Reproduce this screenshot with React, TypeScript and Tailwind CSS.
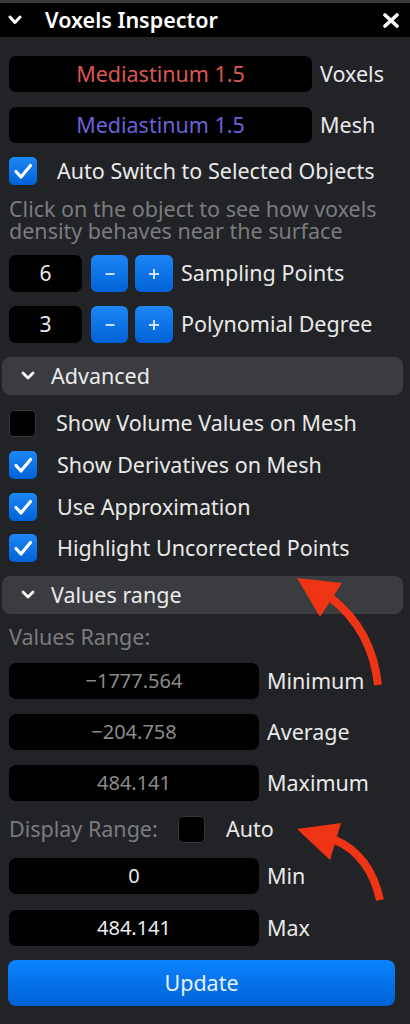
import React from "react";

const font = { fontFamily: '"Noto Sans", "DejaVu Sans", sans-serif' };

function Check() {
  return (
    <svg width="28" height="28" viewBox="0 0 28 28" className="block">
      <polyline points="7,14.5 12,20 21.5,8.5" fill="none" stroke="white" strokeWidth="3.2" strokeLinecap="round" strokeLinejoin="round" />
    </svg>
  );
}

function Checkbox({ checked }: { checked: boolean }) {
  if (checked) {
    return (
      <div className="w-[28px] h-[28px] rounded-[5px] bg-gradient-to-b from-[#1d86f7] to-[#0062d6] shrink-0 flex items-center justify-center">
        <Check />
      </div>
    );
  }
  return <div className="w-[27px] h-[27px] rounded-[5px] bg-black border border-[#34363a] shrink-0" />;
}

function CheckRow({ checked, label, mt }: { checked: boolean; label: string; mt: string }) {
  return (
    <div className={`flex items-center gap-[20px] ${mt}`}>
      <Checkbox checked={checked} />
      <span className="text-[21.5px] leading-[28px] text-[#e9e9e9]">{label}</span>
    </div>
  );
}

function Stepper({ value, label, mt }: { value: string; label: string; mt: string }) {
  return (
    <div className={`flex items-center h-[37px] ${mt}`}>
      <div className="w-[73px] h-[37px] bg-black rounded-[7px] flex items-center justify-center text-[21px] text-[#ececec]">{value}</div>
      <div className="ml-[9px] w-[37px] h-[37px] rounded-[6px] bg-gradient-to-b from-[#1d86f7] to-[#0062d6] flex items-center justify-center">
        <svg width="12" height="12" viewBox="0 0 12 12"><line x1="1.5" y1="6" x2="10.5" y2="6" stroke="#dfe9ff" strokeWidth="1.8" /></svg>
      </div>
      <div className="ml-[7px] w-[38px] h-[37px] rounded-[6px] bg-gradient-to-b from-[#1d86f7] to-[#0062d6] flex items-center justify-center">
        <svg width="12" height="12" viewBox="0 0 12 12"><line x1="1" y1="6" x2="11" y2="6" stroke="#dfe9ff" strokeWidth="1.8" /><line x1="6" y1="1" x2="6" y2="11" stroke="#dfe9ff" strokeWidth="1.8" /></svg>
      </div>
      <span className="ml-[8px] text-[21.5px] text-[#e9e9e9]">{label}</span>
    </div>
  );
}

function SectionHeader({ label, mt }: { label: string; mt: string }) {
  return (
    <div className={`-ml-[7px] w-[401px] h-[38px] rounded-[8px] bg-[#3a3c40] flex items-center ${mt}`}>
      <svg width="14" height="10" viewBox="0 0 14 10" className="ml-[19px]">
        <polyline points="2,2 7,7 12,2" fill="none" stroke="white" strokeWidth="2.8" strokeLinecap="round" strokeLinejoin="round" />
      </svg>
      <span className="ml-[16px] text-[21.5px] text-[#ececec]">{label}</span>
    </div>
  );
}

function ValueRow({ value, label, mt, dim }: { value: string; label: string; mt: string; dim?: boolean }) {
  return (
    <div className={`flex items-center h-[36px] ${mt}`}>
      <div className={`w-[250px] h-[36px] bg-black rounded-[7px] flex items-center justify-center text-[20px] ${dim ? "text-[#8a8a8a]" : "text-[#ececec]"}`}>{value}</div>
      <span className="ml-[8px] text-[21.5px] text-[#e9e9e9]">{label}</span>
    </div>
  );
}

export default function App() {
  return (
    <div className="relative w-[410px] h-[1024px] bg-[#222326] overflow-hidden" style={font}>
      <div className="h-[3px] bg-[#3a3a3a]" />
      <div className="h-[34px] bg-black flex items-center">
        <svg width="14" height="10" viewBox="0 0 14 10" className="ml-[8px]">
          <polyline points="2,2 7,7.5 12,2" fill="none" stroke="white" strokeWidth="3" strokeLinecap="round" strokeLinejoin="round" />
        </svg>
        <span className="ml-[23px] text-[21.5px] font-semibold text-white">Voxels Inspector</span>
        <svg width="16" height="15" viewBox="0 0 16 15" className="ml-auto mr-[11px]">
          <line x1="2" y1="2" x2="14" y2="13" stroke="white" strokeWidth="3.6" strokeLinecap="round" />
          <line x1="14" y1="2" x2="2" y2="13" stroke="white" strokeWidth="3.6" strokeLinecap="round" />
        </svg>
      </div>

      <div className="flex flex-col pl-[9px]">
        <div className="flex items-center mt-[19px] h-[36px]">
          <div className="w-[303px] h-[36px] bg-black rounded-[7px] flex items-center justify-center text-[21.5px] text-[#da5753]">Mediastinum 1.5</div>
          <span className="ml-[8px] text-[21.5px] text-[#e9e9e9]">Voxels</span>
        </div>
        <div className="flex items-center mt-[15px] h-[36px]">
          <div className="w-[303px] h-[36px] bg-black rounded-[7px] flex items-center justify-center text-[21.5px] text-[#6a62d8]">Mediastinum 1.5</div>
          <span className="ml-[8px] text-[21.5px] text-[#e9e9e9]">Mesh</span>
        </div>

        <CheckRow checked label="Auto Switch to Selected Objects" mt="mt-[14px]" />

        <div className="mt-[13px] text-[21.5px] text-[#7b7c7e]">
          <div className="h-[22px] leading-[22px]">Click on the object to see how voxels</div>
          <div className="h-[22px] leading-[22px]">density behaves near the surface</div>
        </div>

        <Stepper value="6" label="Sampling Points" mt="mt-[13px]" />
        <Stepper value="3" label="Polynomial Degree" mt="mt-[14px]" />

        <SectionHeader label="Advanced" mt="mt-[14px]" />

        <CheckRow checked={false} label="Show Volume Values on Mesh" mt="mt-[14px]" />
        <CheckRow checked label="Show Derivatives on Mesh" mt="mt-[14px]" />
        <CheckRow checked label="Use Approximation" mt="mt-[14px]" />
        <CheckRow checked label="Highlight Uncorrected Points" mt="mt-[13px]" />

        <SectionHeader label="Values range" mt="mt-[14px]" />

        <div className="mt-[10px] h-[26px] flex items-center text-[21.5px] text-[#7b7c7e]">Values Range:</div>

        <ValueRow value="−1777.564" label="Minimum" mt="mt-[13px]" dim />
        <ValueRow value="−204.758" label="Average" mt="mt-[15px]" dim />
        <ValueRow value="484.141" label="Maximum" mt="mt-[15px]" dim />

        <div className="flex items-center mt-[15px] h-[27px]">
          <span className="text-[21.5px] text-[#7b7c7e] w-[169px]">Display Range:</span>
          <Checkbox checked={false} />
          <span className="ml-[21px] text-[21.5px] text-[#e9e9e9]">Auto</span>
        </div>

        <ValueRow value="0" label="Min" mt="mt-[15px]" />
        <ValueRow value="484.141" label="Max" mt="mt-[16px]" />

        <div className="-ml-[1px] mt-[14px] w-[387px] h-[46px] rounded-[8px] bg-gradient-to-b from-[#0c83ff] to-[#0062d4] flex items-center justify-center text-[21.5px] text-[#e6f0ff]">
          Update
        </div>
      </div>

      <svg className="absolute inset-0 pointer-events-none" width="410" height="1024" viewBox="0 0 410 1024">
        <path d="M378,685 Q372,630 331,598" fill="none" stroke="#ef3415" strokeWidth="8" />
        <polygon points="297,578 342,583 320,617" fill="#ef3415" />
        <path d="M380,900 Q370,855 335,840" fill="none" stroke="#ef3415" strokeWidth="8" />
        <polygon points="297,829 341,823 330,860" fill="#ef3415" />
      </svg>
    </div>
  );
}
